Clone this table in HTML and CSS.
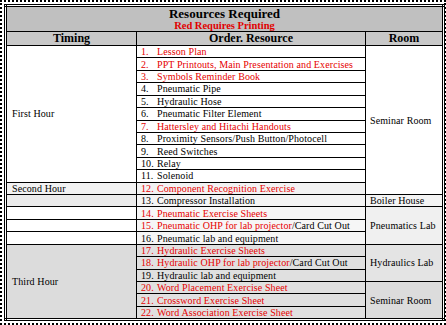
FILE: index.html
```html
<!DOCTYPE html>
<html>
<head>
<meta charset="utf-8">
<link rel="stylesheet" href="styles.css">
</head>
<body>
<div class="frame">
<table class="res">
  <colgroup>
    <col class="c-time">
    <col class="c-res">
    <col class="c-room">
  </colgroup>
  <thead>
    <tr class="title-row">
      <th colspan="3"><div class="title">Resources Required</div><div class="subtitle">Red Requires Printing</div></th>
    </tr>
    <tr class="head-row">
      <th>Timing</th>
      <th>Order. Resource</th>
      <th>Room</th>
    </tr>
  </thead>
  <tbody>
    <tr>
      <td class="time" rowspan="11">First Hour</td>
      <td class="red"><span class="n">1.</span>Lesson Plan</td>
      <td class="room" rowspan="12">Seminar Room</td>
    </tr>
    <tr><td class="red"><span class="n">2.</span>PPT Printouts, Main Presentation and Exercises</td></tr>
    <tr><td class="red"><span class="n">3.</span>Symbols Reminder Book</td></tr>
    <tr><td><span class="n">4.</span>Pneumatic Pipe</td></tr>
    <tr><td><span class="n">5.</span>Hydraulic Hose</td></tr>
    <tr><td><span class="n">6.</span>Pneumatic Filter Element</td></tr>
    <tr><td class="red"><span class="n">7.</span>Hattersley and Hitachi Handouts</td></tr>
    <tr><td><span class="n">8.</span>Proximity Sensors/Push Button/Photocell</td></tr>
    <tr><td><span class="n">9.</span>Reed Switches</td></tr>
    <tr><td><span class="n">10.</span>Relay</td></tr>
    <tr><td><span class="n">11.</span>Solenoid</td></tr>
    <tr class="r12">
      <td class="time">Second Hour</td>
      <td class="red"><span class="n">12.</span>Component Recognition Exercise</td>
    </tr>
    <tr class="r13">
      <td class="time"></td>
      <td><span class="n">13.</span>Compressor Installation</td>
      <td class="room">Boiler House</td>
    </tr>
    <tr class="pn">
      <td class="time"></td>
      <td class="red"><span class="n">14.</span>Pneumatic Exercise Sheets</td>
      <td class="room" rowspan="3">Pneumatics Lab</td>
    </tr>
    <tr class="pn">
      <td class="time"></td>
      <td><span class="red"><span class="n">15.</span>Pneumatic OHP for lab projector</span>/Card Cut Out</td>
    </tr>
    <tr class="pn">
      <td class="time"></td>
      <td><span class="n">16.</span>Pneumatic lab and equipment</td>
    </tr>
    <tr class="hy">
      <td class="time third" rowspan="6">Third Hour</td>
      <td class="red"><span class="n">17.</span>Hydraulic Exercise Sheets</td>
      <td class="room hyroom" rowspan="3">Hydraulics Lab</td>
    </tr>
    <tr class="hy">
      <td><span class="red"><span class="n">18.</span>Hydraulic OHP for lab projector</span>/Card Cut Out</td>
    </tr>
    <tr class="hy">
      <td><span class="n">19.</span>Hydraulic lab and equipment</td>
    </tr>
    <tr class="hy">
      <td class="red"><span class="n">20.</span>Word Placement Exercise Sheet</td>
      <td class="room semroom" rowspan="3">Seminar Room</td>
    </tr>
    <tr class="hy">
      <td class="red"><span class="n">21.</span>Crossword Exercise Sheet</td>
    </tr>
    <tr class="hy">
      <td class="red"><span class="n">22.</span>Word Association Exercise Sheet</td>
    </tr>
  </tbody>
</table>
</div>
</body>
</html>
```

FILE: styles.css
```css
html, body {
  margin: 0;
  padding: 0;
  background: #ffffff;
}

.frame {
  width: 446px;
  height: 325px;
  box-sizing: border-box;
  border: 2px dotted #000;
  padding: 2px;
}

.res {
  width: 438px;
  height: 317px;
  border-collapse: collapse;
  border: 3px double #000;
  table-layout: fixed;
  font-family: "Liberation Serif", "Times New Roman", serif;
  font-size: 10px;
  letter-spacing: 0.1px;
  color: #000;
}

.c-time { width: 131px; }
.c-res { width: 229px; }
.c-room { width: 78px; }

.res th,
.res td {
  border: 1px solid #000;
  padding: 0 4px;
  line-height: 11px;
  white-space: nowrap;
  overflow: hidden;
}

.title-row th {
  background: #c0c0c0;
  height: 24px;
  padding: 0;
  text-align: center;
}

.title {
  font-size: 13px;
  font-weight: bold;
  letter-spacing: 0;
  line-height: 14px;
}

.subtitle {
  font-size: 10.5px;
  font-weight: bold;
  letter-spacing: 0;
  color: #e00000;
  line-height: 10px;
}

.head-row th {
  background: #c8c8c8;
  font-size: 12px;
  font-weight: bold;
  letter-spacing: 0;
  height: 13px;
  line-height: 13px;
  text-align: center;
}

.res tbody tr {
  height: 12.3px;
}

.res tbody td {
  height: 11px;
}

.res td.time {
  padding-left: 5px;
  vertical-align: middle;
}

.res td.room {
  padding-left: 4px;
  vertical-align: middle;
}

.n {
  display: inline-block;
  min-width: 14px;
  margin-right: 2px;
}

.red {
  color: #e60000;
}

.r12 td {
  background: #f2f2f2;
}

.r13 td {
  background: #f4f4f4;
}

.r13 td.time {
  background: #ebebeb;
}

.pn td {
  background: #f6f6f6;
}

.pn td.time {
  background: #ffffff;
}

.pn td.room {
  background: #f0f0f0;
}

.hy td {
  background: #e0e0e0;
}

.hy td.third {
  background: #dcdcdc;
}

.hy td.hyroom {
  background: #e4e4e4;
}

.hy td.semroom {
  background: #dcdcdc;
}
```
